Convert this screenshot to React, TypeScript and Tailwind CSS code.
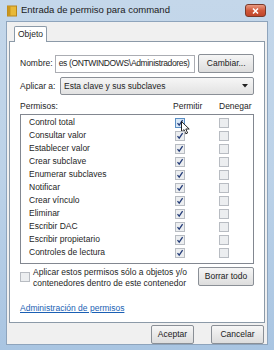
import React from "react"

const PERMS = [
  "Control total",
  "Consultar valor",
  "Establecer valor",
  "Crear subclave",
  "Enumerar subclaves",
  "Notificar",
  "Crear vínculo",
  "Eliminar",
  "Escribir DAC",
  "Escribir propietario",
  "Controles de lectura",
]

function Check({ checked, hot }: { checked?: boolean; hot?: boolean }) {
  return (
    <div
      className={`w-[10px] h-[10px] border flex items-center justify-center ${
        hot ? "border-[#5a8ec4] bg-[#d8e8f8]" : "border-[#b8bcc2] bg-[#eceef0]"
      }`}
    >
      {checked && (
        <svg width="8" height="8" viewBox="0 0 8 8">
          <path d="M1.5 4.2 L3.2 6.2 L6.6 1.2" fill="none" stroke="#243c78" strokeWidth="1.3" />
        </svg>
      )}
    </div>
  )
}

function Btn({ children, className = "" }: { children: React.ReactNode; className?: string }) {
  return (
    <div
      className={`h-[19px] border border-[#8a8f96] rounded-[2px] bg-gradient-to-b from-[#f6f6f6] to-[#dddddd] flex items-center justify-center text-[#1a1a1a] whitespace-nowrap ${className}`}
    >
      {children}
    </div>
  )
}

export default function App() {
  return (
    <div
      className="w-[274px] h-[350px] bg-gradient-to-b from-[#c4d7ea] via-[#bcd2e8] to-[#a9c5e2] flex flex-col text-[8.5px] text-[#1e1e1e] overflow-hidden whitespace-nowrap"
      style={{ fontFamily: '"Liberation Sans", Arial, sans-serif' }}
    >
      {/* title bar */}
      <div className="h-[21px] flex items-center pl-[7px] pr-[8px] shrink-0">
        <svg width="10" height="12" viewBox="0 0 10 12" className="mr-[4px]">
          <rect x="0.5" y="1" width="9" height="10" fill="#e8b938" stroke="#b8861c" />
          <rect x="0.5" y="1" width="3" height="10" fill="#c9961e" />
        </svg>
        <span className="text-[9.5px] text-[#1b1b1b]">Entrada de permiso para command</span>
        <div className="ml-auto w-[21px] h-[13px] rounded-[3px] border border-[#7a3a2a] bg-gradient-to-b from-[#e89a82] via-[#d0583a] to-[#c0452a] flex items-center justify-center">
          <svg width="7" height="6" viewBox="0 0 7 6">
            <path d="M1 0.5 L6 5.5 M6 0.5 L1 5.5" stroke="white" strokeWidth="1.5" />
          </svg>
        </div>
      </div>

      {/* client area */}
      <div className="flex-1 mx-[6px] mb-[6px] bg-[#f0f0f0] border border-[#8ea4bc] flex flex-col px-[2px] pt-[3px]">
        {/* tab strip */}
        <div className="flex pl-[5px]">
          <div className="h-[16px] px-[3px] border border-b-0 border-[#8c9aa8] bg-white rounded-t-[2px] flex items-center relative top-[1px]">
            Objeto
          </div>
        </div>
        {/* tab panel */}
        <div className="h-[282px] bg-white border border-[#8c9aa8] px-[10px] pt-[12px] flex flex-col">
          <div className="flex items-center h-[19px]">
            <span className="w-[35px]">Nombre:</span>
            <div className="w-[142px] h-[18px] border border-[#abadb3] flex items-center px-[3px] overflow-hidden">
              <span className="tracking-[-0.35px]">es (ONTWINDOWS\Administradores)</span>
            </div>
            <Btn className="ml-[3px] w-[56px]">Cambiar...</Btn>
          </div>
          <div className="flex items-center h-[18px] mt-[4px]">
            <span className="w-[40px]">Aplicar a:</span>
            <div className="flex-1 h-[18px] border border-[#8a8f96] rounded-[2px] bg-gradient-to-b from-[#f6f6f6] to-[#e2e2e2] flex items-center px-[3px]">
              <span>Esta clave y sus subclaves</span>
              <svg width="6" height="4" viewBox="0 0 6 4" className="ml-auto mr-[2px]">
                <path d="M0 0 H6 L3 3.5 Z" fill="#222" />
              </svg>
            </div>
          </div>
          <div className="flex items-center mt-[5px] h-[12px]">
            <span>Permisos:</span>
            <span className="ml-auto w-[32px]">Permitir</span>
            <span className="ml-[14px] w-[35px]">Denegar</span>
          </div>
          <div className="mt-[2px] h-[150px] border border-[#828790] flex flex-col pt-[1px]">
            {PERMS.map((p, i) => (
              <div key={p} className="h-[13px] flex items-center pl-[8px]">
                <span className="flex-1">{p}</span>
                <div className="w-[44px] flex relative">
                  <Check checked hot={i === 0} />
                  {i === 0 && (
                    <svg width="9" height="14" viewBox="0 0 9 14" className="absolute left-[6px] top-[3px]">
                      <path d="M0.5 0.5 V11 L3 8.6 L4.8 12.8 L6.6 12 L4.8 8 H8.2 Z" fill="white" stroke="#111" strokeWidth="0.9" strokeLinejoin="round" />
                    </svg>
                  )}
                </div>
                <div className="w-[34px] flex">
                  <Check />
                </div>
              </div>
            ))}
          </div>
          <div className="flex mt-[2px]">
            <div className="pt-[6px] pr-[3px]">
              <Check />
            </div>
            <div className="leading-[11px] pt-[1px] flex-1">
              <div>Aplicar estos permisos sólo a objetos y/o</div>
              <div>contenedores dentro de este contenedor</div>
            </div>
            <Btn className="w-[56px] mt-[1px]">Borrar todo</Btn>
          </div>
          <div className="mt-[13px] text-[#1a5fb4] underline">Administración de permisos</div>
        </div>
        {/* buttons */}
        <div className="flex justify-end gap-[17px] pt-[2px] pr-[1px]">
          <Btn className="w-[43px] h-[16px] border-[#3c7fb1] from-[#eaf6fd] to-[#bee6fd]">Aceptar</Btn>
          <Btn className="w-[53px] h-[16px]">Cancelar</Btn>
        </div>
      </div>
    </div>
  )
}
